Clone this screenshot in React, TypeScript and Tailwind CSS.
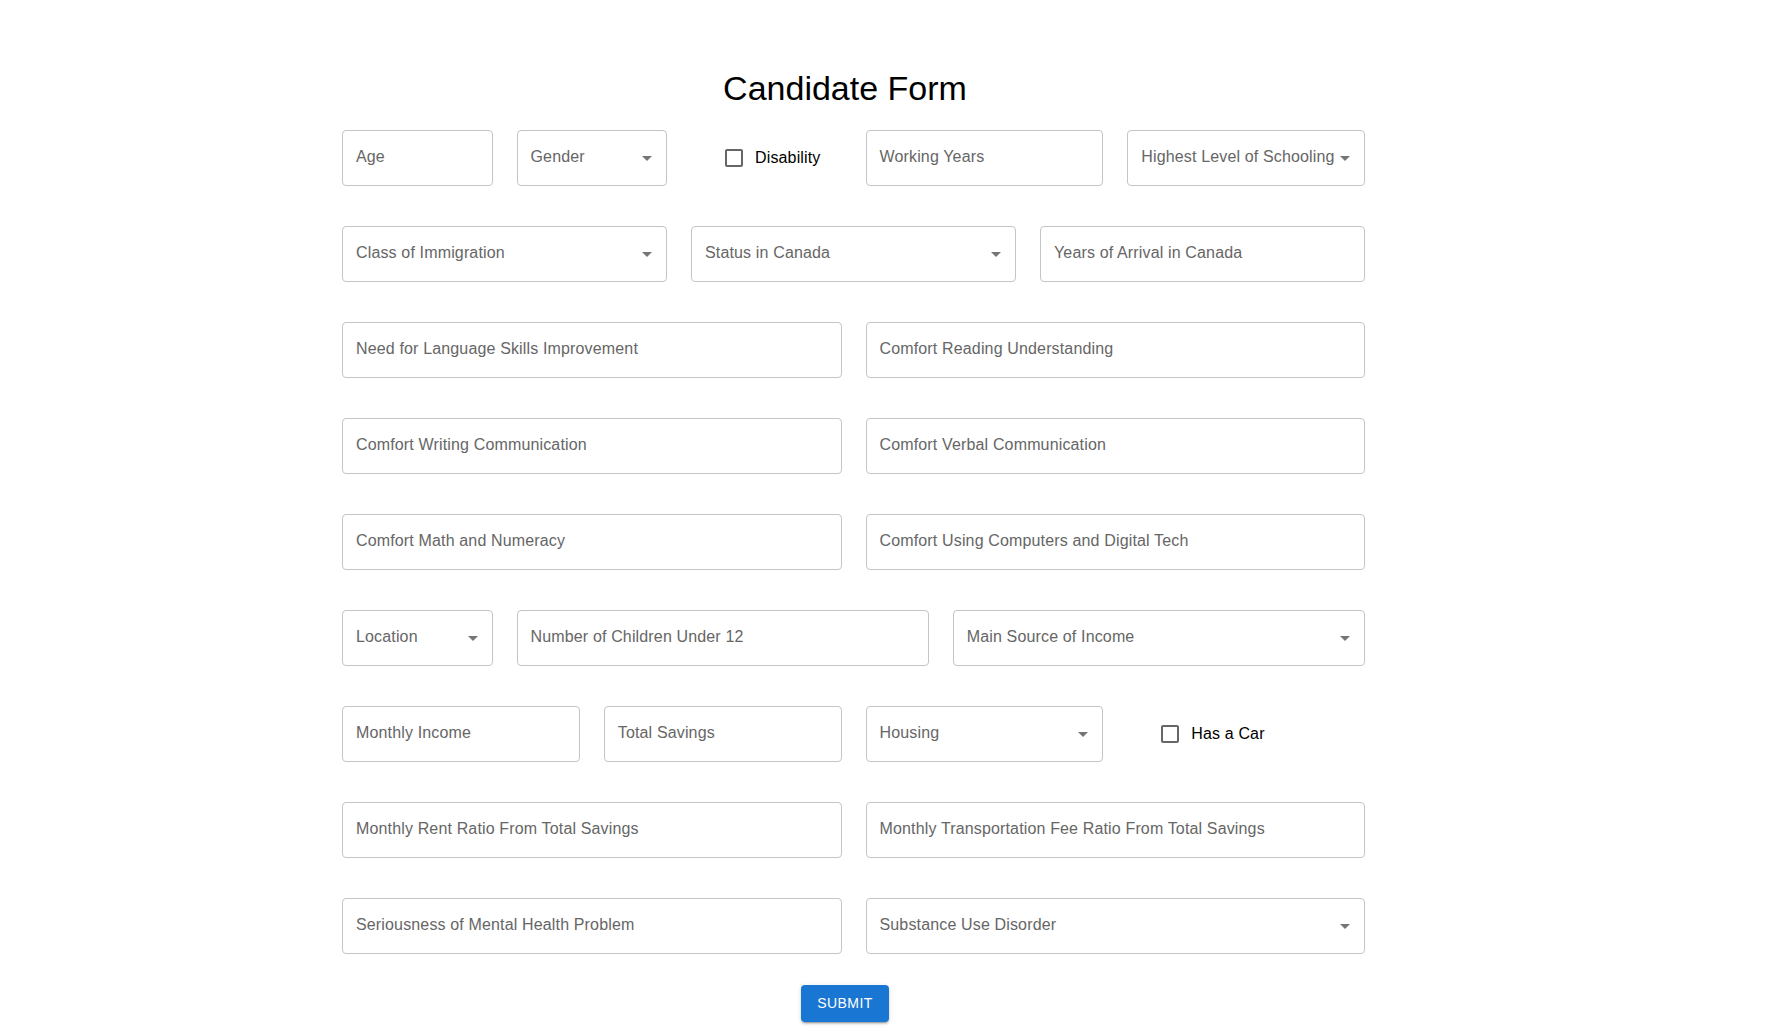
import React from "react";

type Field = { label: string; span: number; kind: "text" | "select" | "check" };

const rows: Field[] = [
  { label: "Age", span: 2, kind: "text" },
  { label: "Gender", span: 2, kind: "select" },
  { label: "Disability", span: 2, kind: "check" },
  { label: "Working Years", span: 3, kind: "text" },
  { label: "Highest Level of Schooling", span: 3, kind: "select" },
  { label: "Class of Immigration", span: 4, kind: "select" },
  { label: "Status in Canada", span: 4, kind: "select" },
  { label: "Years of Arrival in Canada", span: 4, kind: "text" },
  { label: "Need for Language Skills Improvement", span: 6, kind: "text" },
  { label: "Comfort Reading Understanding", span: 6, kind: "text" },
  { label: "Comfort Writing Communication", span: 6, kind: "text" },
  { label: "Comfort Verbal Communication", span: 6, kind: "text" },
  { label: "Comfort Math and Numeracy", span: 6, kind: "text" },
  { label: "Comfort Using Computers and Digital Tech", span: 6, kind: "text" },
  { label: "Location", span: 2, kind: "select" },
  { label: "Number of Children Under 12", span: 5, kind: "text" },
  { label: "Main Source of Income", span: 5, kind: "select" },
  { label: "Monthly Income", span: 3, kind: "text" },
  { label: "Total Savings", span: 3, kind: "text" },
  { label: "Housing", span: 3, kind: "select" },
  { label: "Has a Car", span: 3, kind: "check" },
  { label: "Monthly Rent Ratio From Total Savings", span: 6, kind: "text" },
  { label: "Monthly Transportation Fee Ratio From Total Savings", span: 6, kind: "text" },
  { label: "Seriousness of Mental Health Problem", span: 6, kind: "text" },
  { label: "Substance Use Disorder", span: 6, kind: "select" },
];

const spanClass: Record<number, string> = {
  2: "col-span-2",
  3: "col-span-3",
  4: "col-span-4",
  5: "col-span-5",
  6: "col-span-6",
};

function ArrowDrop() {
  return (
    <svg viewBox="0 0 24 24" width="24" height="24" className="absolute right-[7px] top-[15px]" fill="rgba(0,0,0,0.54)">
      <path d="M7 10l5 5 5-5z" />
    </svg>
  );
}

function CheckIcon() {
  return (
    <svg viewBox="0 0 24 24" width="24" height="24" fill="rgba(0,0,0,0.6)">
      <path d="M19 5v14H5V5h14m0-2H5c-1.11 0-2 .9-2 2v14c0 1.1.89 2 2 2h14c1.1 0 2-.9 2-2V5c0-1.1-.9-2-2-2z" />
    </svg>
  );
}

function FieldBox({ f }: { f: Field }) {
  if (f.kind === "check") {
    return (
      <div className={`${spanClass[f.span]} h-[56px] flex items-center pl-[31px]`}>
        <CheckIcon />
        <span className="ml-[9px] text-[16px] leading-[24px] tracking-[0.15px] text-black">{f.label}</span>
      </div>
    );
  }
  return (
    <div className={`${spanClass[f.span]} relative h-[56px] rounded-[4px] border border-[#c4c4c4] bg-white`}>
      <div className="pl-[13px] pt-[14px] text-[16px] leading-[23px] tracking-[0.15px] text-[#666666] whitespace-nowrap">
        {f.label}
      </div>
      {f.kind === "select" && <ArrowDrop />}
    </div>
  );
}

export default function App() {
  return (
    <div className="w-full bg-white font-['Liberation_Sans',Arial,sans-serif] pt-[67px] pb-[9px]">
      <div className="ml-[334px] w-[1022px] text-center text-[34px] leading-[42px] text-black">
        Candidate Form
      </div>
      <div className="ml-[342px] mt-[21px] w-[1023px] grid grid-cols-12 gap-x-6 gap-y-10">
        {rows.map((f) => (
          <FieldBox key={f.label} f={f} />
        ))}
      </div>
      <div className="ml-[334px] mt-[31px] w-[1022px] flex justify-center">
        <button
          type="button"
          className="bg-[#1976d2] text-white text-[14px] leading-[24.5px] tracking-[0.4px] uppercase px-4 py-[6px] rounded-[4px] shadow-[0px_3px_1px_-2px_rgba(0,0,0,0.2),0px_2px_2px_0px_rgba(0,0,0,0.14),0px_1px_5px_0px_rgba(0,0,0,0.12)]"
        >
          Submit
        </button>
      </div>
    </div>
  );
}
